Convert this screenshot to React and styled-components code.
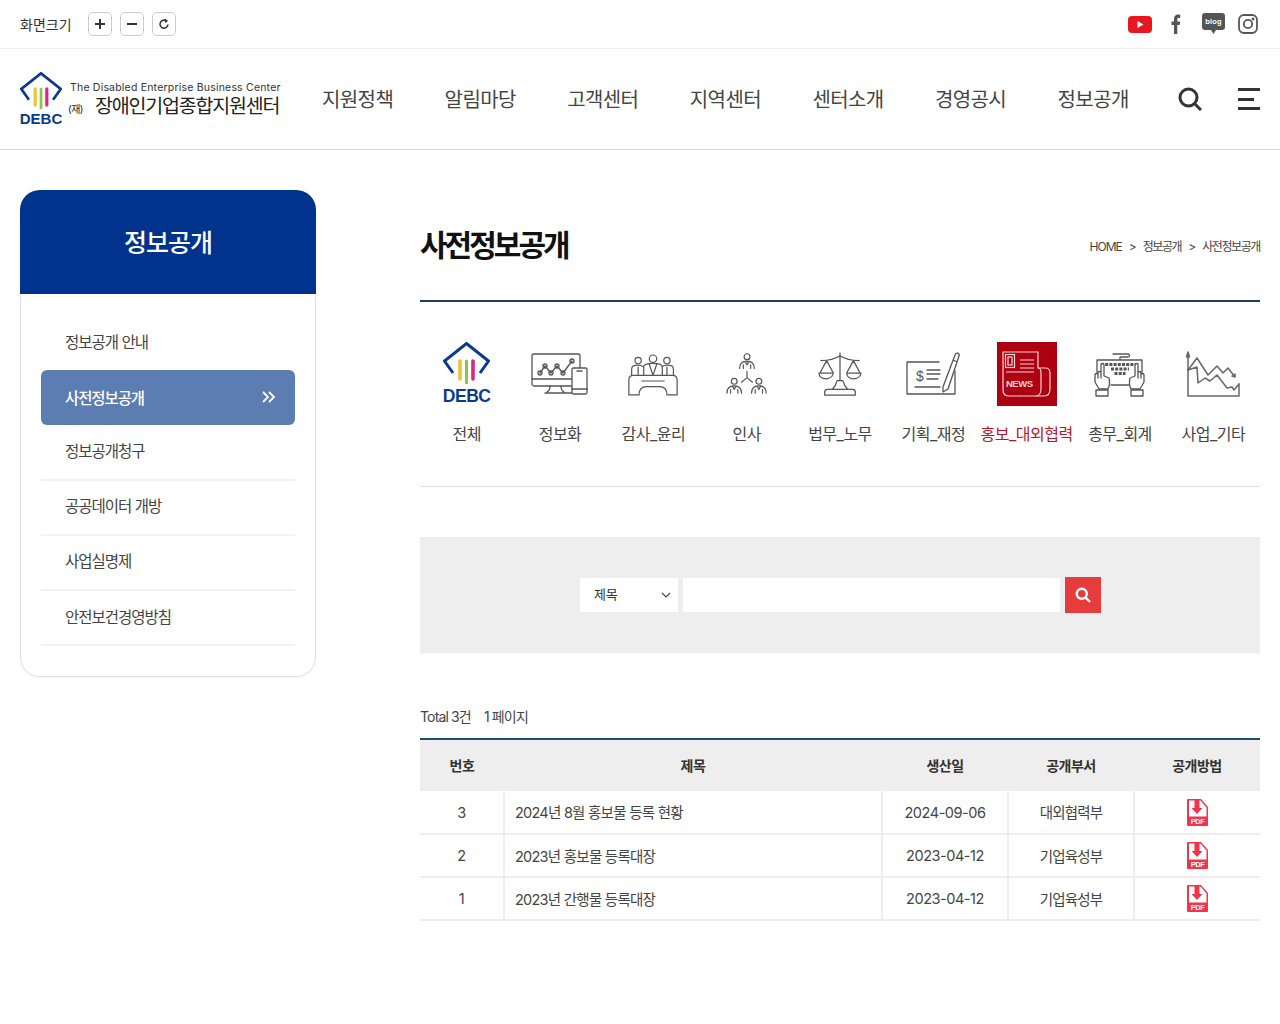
import React from 'react';
import styled, { createGlobalStyle } from 'styled-components';

const GlobalStyle = createGlobalStyle`
  * { box-sizing: border-box; }
  html, body { margin: 0; padding: 0; background: #fff; }
  body {
    font-family: Inter, "Noto Sans CJK KR", sans-serif;
    color: #333;
  }
  ul { list-style: none; margin: 0; padding: 0; }
  a { color: inherit; text-decoration: none; }
  h1, h2 { margin: 0; }
`;

const Page = styled.div`
  width: 1280px;
  min-height: 1024px;
`;

/* top util bar */
const TopBar = styled.div`
  height: 49px;
  border-bottom: 1px solid #f0f0f0;
  padding: 0 22px 0 20px;
  display: flex;
  align-items: center;
  justify-content: space-between;
`;
const FontSize = styled.div`
  display: flex;
  align-items: center;
  font-size: 14px;
  color: #333;
  span { width: 68px; }
`;
const SizeBtn = styled.button`
  width: 24px;
  height: 24px;
  margin-right: 8px;
  padding: 0;
  border: 1px solid #ccc;
  border-radius: 5px;
  background: #fff;
  display: flex;
  align-items: center;
  justify-content: center;
  color: #333;
`;
const Sns = styled.div`
  display: flex;
  align-items: center;
  gap: 13px;
`;

/* main header */
const HeaderEl = styled.header`
  height: 101px;
  border-bottom: 1px solid #d9d9d9;
  padding: 0 20px;
  display: flex;
  align-items: center;
`;
const Logo = styled.a`
  width: 262px;
  flex: none;
  display: flex;
  align-items: center;
  gap: 6px;
`;
const LogoMark = styled.div`
  width: 42px;
  display: flex;
  flex-direction: column;
  align-items: center;
  gap: 2px;
  flex: none;
`;
const DebcText = styled.span`
  font-family: "Liberation Sans", sans-serif;
  font-weight: 700;
  font-size: ${(p) => p.$size}px;
  line-height: 1;
  color: #0b3a8c;
`;
const LogoCopy = styled.div`
  display: flex;
  flex-direction: column;
  margin-top: 4px;
  white-space: nowrap;
  em {
    font-style: normal;
    font-size: 10.5px;
    line-height: 13px;
    letter-spacing: 0.2px;
    color: #333;
    padding-left: 2px;
  }
  strong {
    display: flex;
    align-items: baseline;
    font-weight: 400;
    font-size: 19.5px;
    line-height: 24px;
    letter-spacing: -1.2px;
    color: #222;
  }
  small {
    width: 27px;
    font-size: 10px;
    letter-spacing: -0.5px;
  }
`;
const Gnb = styled.ul`
  display: flex;
  margin: -2px 0 0 40px;
  li {
    width: 122.6px;
    font-size: 20px;
    letter-spacing: -0.6px;
    font-weight: 400;
    color: #444;
    white-space: nowrap;
  }
  li:last-child { width: 100px; }
`;
const HeaderBtns = styled.div`
  margin-left: auto;
  display: flex;
  align-items: center;
  gap: 36px;
`;
const Hamburger = styled.div`
  width: 22px;
  height: 22px;
  display: flex;
  flex-direction: column;
  justify-content: space-between;
  i {
    display: block;
    height: 3px;
    background: #333;
  }
  i:nth-child(2) { width: 16px; }
`;

/* body */
const Body = styled.div`
  display: flex;
  padding: 40px 20px 0;
`;
const Aside = styled.aside`
  width: 296px;
  flex: none;
  height: 487px;
  border: 1px solid #e0e0e0;
  border-radius: 20px;
  box-shadow: 0 1px 3px rgba(0, 0, 0, 0.05);
`;
const AsideHead = styled.h2`
  height: 104px;
  margin: -1px -1px 0;
  padding-bottom: 2px;
  background: #00338d;
  border-radius: 20px 20px 0 0;
  color: #fff;
  font-size: 25px;
  font-weight: 500;
  letter-spacing: -1px;
  display: flex;
  align-items: center;
  justify-content: center;
`;
const SideList = styled.ul`
  padding: 21px 20px 0;
`;
const SideItem = styled.li`
  height: 55.2px;
  padding: 0 19px ${(p) => (p.$active ? '2px' : '4px')} 24px;
  display: flex;
  align-items: center;
  justify-content: space-between;
  font-size: 15.5px;
  letter-spacing: ${(p) => (p.$active ? '-1.1px' : '-1px')};
  color: ${(p) => (p.$active ? '#fff' : '#444')};
  font-weight: ${(p) => (p.$active ? 500 : 400)};
  background: ${(p) => (p.$active ? '#5b7db1' : 'transparent')};
  border-radius: ${(p) => (p.$active ? '6px' : '0')};
  border-bottom: ${(p) => (p.$plain ? 'none' : '2px solid #f2f2f2')};
`;
const Main = styled.main`
  width: 840px;
  margin-left: 104px;
`;
const TitleRow = styled.div`
  height: 112px;
  border-bottom: 2px solid #1f3f5c;
  display: flex;
  align-items: flex-start;
  justify-content: space-between;
  padding-top: 34px;
  h1 {
    font-size: 30px;
    line-height: 42px;
    font-weight: 700;
    letter-spacing: -3px;
    color: #111;
  }
`;
const Crumbs = styled.div`
  display: flex;
  gap: 7px;
  padding-top: 14px;
  font-size: 12px;
  line-height: 18px;
  color: #444;
`;
const Crumb = styled.span`
  letter-spacing: ${(p) => (p.$ko ? '-1.4px' : '-1px')};
`;
const Cats = styled.ul`
  display: grid;
  grid-template-columns: repeat(9, 1fr);
  padding: 40px 0 0;
  height: 185px;
  border-bottom: 1px solid #ddd;
`;
const Cat = styled.li`
  display: flex;
  flex-direction: column;
  align-items: center;
  font-size: 16px;
  letter-spacing: -0.5px;
  white-space: nowrap;
  color: ${(p) => (p.$active ? '#b5162b' : '#444')};
`;
const CatIcon = styled.div`
  width: 60px;
  height: 64px;
  margin-bottom: 15.5px;
  display: flex;
  align-items: center;
  justify-content: center;
  flex-direction: column;
  gap: ${(p) => p.$gap || 0}px;
  background: ${(p) => (p.$active ? '#ad0010' : 'transparent')};
`;
const CatLabel = styled.span`
  line-height: 24px;
`;
const SearchBox = styled.form`
  height: 116px;
  margin-top: 50px;
  padding-left: 160px;
  background: #eee;
  box-shadow: 0 1px 2px rgba(0, 0, 0, 0.04);
  display: flex;
  align-items: center;
  gap: 5px;
`;
const SelectBox = styled.div`
  width: 98px;
  height: 34px;
  background: #fff;
  padding: 0 7px 0 14px;
  display: flex;
  align-items: center;
  justify-content: space-between;
  font-size: 13px;
  letter-spacing: -0.3px;
  color: #333;
  b {
    font-weight: 400;
    margin-top: -3px;
  }
`;
const SearchInput = styled.input`
  width: 377px;
  height: 34px;
  border: 0;
  background: #fff;
  outline: none;
`;
const SearchBtn = styled.button`
  width: 36px;
  height: 36px;
  padding: 0;
  border: 0;
  background: #e63c3c;
  display: flex;
  align-items: center;
  justify-content: center;
`;
const Total = styled.div`
  margin-top: 53px;
  height: 21px;
  font-size: 14px;
  line-height: 21px;
  letter-spacing: -0.85px;
  color: #444;
  display: flex;
  gap: 13px;
`;
const Table = styled.table`
  width: 840px;
  margin-top: 11px;
  border-collapse: collapse;
  table-layout: fixed;
  border-top: 2px solid #1f4f70;
  th {
    height: 52px;
    background: #eee;
    font-size: 14px;
    font-weight: 700;
    letter-spacing: -0.5px;
    color: #333;
    padding: 0 0 2px;
  }
  td {
    height: 43px;
    padding: 0;
    text-align: center;
    font-size: 14.5px;
    letter-spacing: -0.45px;
    color: #444;
    border-bottom: 2px solid #eee;
    border-left: 2px solid #eee;
  }
  td:first-child { border-left: 0; }
`;
const TitleCell = styled.td`
  && {
    text-align: left;
    padding: 0 0 1px 10px;
    letter-spacing: -0.75px;
  }
`;
const DeptCell = styled.td`
  && {
    padding-bottom: 1px;
    letter-spacing: -0.8px;
  }
`;
const PdfCell = styled.span`
  display: flex;
  justify-content: center;
`;

const Svg = styled.svg`
  display: block;
  flex: none;
`;

const DiamondMark = ({ w }) => (
  <Svg width={w} height={(w * 42) / 47} viewBox="0 0 47 42" fill="none">
    <path d="M10 31 1.500 19 23.500 1.500 45.500 19 37 31" stroke="#0b3a8c" strokeWidth="3" />
    <path d="M17 19v18" stroke="#efc23a" strokeWidth="3.600" strokeLinecap="round" />
    <path d="M23.500 19v22" stroke="#8fc24a" strokeWidth="3" strokeLinecap="round" />
    <path d="M30 19v18" stroke="#d8287f" strokeWidth="3.600" strokeLinecap="round" />
  </Svg>
);

const line = { fill: 'none', stroke: '#555', strokeWidth: 1.3, strokeLinejoin: 'round', strokeLinecap: 'round' };

const Person = ({ x, y }) => (
  <g {...line}>
    <circle cx={x} cy={y} r="3.2" />
    <path d={`M${x - 8} ${y + 13}c0-6 3-8 8-8s8 2 8 8M${x - 4} ${y + 13}v-4M${x + 4} ${y + 13}v-4M${x - 2} ${y + 5}l2 4 2-4`} />
  </g>
);

const IconDevices = () => (
  <Svg width="57" height="42" viewBox="0 0 57 42" {...line}>
    <path d="M41 33H3a2 2 0 0 1-2-2V3a2 2 0 0 1 2-2h44a2 2 0 0 1 2 2v12" />
    <path d="M1 26h40M16 39c2-1 3-3 3-6M30 33c0 3 1 5 3 6M14 40h27" />
    <path d="M9 20l5-7 6 7 6-7 6 7 9-12" />
    <circle cx="9" cy="20" r="2" /><circle cx="14" cy="13" r="2" /><circle cx="20" cy="20" r="2" /><circle cx="26" cy="13" r="2" /><circle cx="32" cy="20" r="2" /><circle cx="41" cy="8" r="2" />
    <rect x="41" y="15" width="15" height="26" rx="1.500" fill="#fff" />
    <path d="M41 36h15M46 18h5" />
  </Svg>
);
const IconMeeting = () => (
  <Svg width="52" height="43" viewBox="0 0 56 46" {...line}>
    <circle cx="12" cy="8" r="3.400" /><circle cx="28" cy="6" r="4" /><circle cx="43" cy="8" r="3.400" />
    <path d="M5 24v-7c0-3 3-4 7-4 2 0 4 .5 5 1.500M50 24v-7c0-3-3-4-7-4-2 0-4 .5-5 1.500M18 24v-9c0-3 5-4 10-4s10 1 10 4v9M24 12l4 12 4-12M12 15v9M43 15v9" />
    <path d="M2 45V29c0-3 2-5 5-5h42c3 0 5 2 5 5v16H43c0-6-3-9-8-9H21c-5 0-8 3-8 9zM16 30h24" />
  </Svg>
);
const IconOrg = () => (
  <Svg width="44" height="42" viewBox="0 0 48 46" {...line}>
    <Person x={24} y={4} />
    <Person x={10} y={31} />
    <Person x={37} y={31} />
    <path d="M24 20v7M24 27l-6 5M24 27l6 5" />
  </Svg>
);
const IconScale = () => (
  <Svg width="46" height="44" viewBox="0 0 48 46" {...line}>
    <path d="M4 9c8 0 14-1 20-5 6 4 12 5 20 5M24 1v29" />
    <path d="M10 9 3 22h14zM38 9l-7 13h14zM2 22c0 8 14 8 15 0M31 22c0 8 14 8 15 0" />
    <path d="M21 30h6c1 4 3 7 5 9H16c2-2 4-5 5-9zM11 39h26c2 0 3 1 3 3v3H8v-3c0-2 1-3 3-3z" />
  </Svg>
);
const IconCheck = () => (
  <Svg width="54" height="46" viewBox="0 0 54 46" {...line}>
    <path d="M33 11H1v32h48V20" />
    <text x="10" y="30" fontFamily="Liberation Sans, sans-serif" fontSize="14" fill="#555" stroke="none">$</text>
    <path d="M21 19h13M21 23h13M21 28h11M9 36h25" />
    <path d="M37 36l12-32c1-3 5-2 4 1L42 38l-5 3zM47 9l4 2" />
  </Svg>
);
const IconNews = () => (
  <Svg width="49" height="46" viewBox="0 0 49 46" fill="none" stroke="#f6d5d5" strokeWidth="1.200">
    <path d="M1 1v38c0 4 2 6 6 6h35c4 0 6-3 6-7V22c0-3-2-5-5-5h-7V1z" />
    <path d="M36 17c2 0 3 2 3 5v16c0 4-2 7-5 7" />
    <rect x="3.500" y="3.500" width="9" height="13" /><rect x="6" y="6" width="4" height="8" />
    <path d="M18 9h14M18 13h14M18 17h14M4 21h28" />
    <text x="4" y="36" fontFamily="Liberation Sans, sans-serif" fontWeight="700" fontSize="9.500" fill="#f6d5d5" stroke="none">NEWS</text>
  </Svg>
);
const Hand = () => (
  <g>
    <path d="M6 38 2 31v-7a1.500 1.500 0 0 1 3 0v3-5a1.500 1.500 0 0 1 3 0v5V14a1.500 1.500 0 0 1 3 0v11l5 2c1 4 1 7-1 11z" fill="#fff" />
    <rect x="3" y="39" width="12" height="6" />
  </g>
);
const IconKeyboard = () => (
  <Svg width="54" height="46" viewBox="0 0 54 46" {...line}>
    <path d="M27 9V6h8c2 0 2-3 0-3H20M4 28V9h45v19M18 34h18" />
    <g strokeLinecap="butt" strokeWidth="3">
      <path d="M8 13.500h38" strokeDasharray="3 1.200" />
      <path d="M18 18h18" strokeDasharray="3 1.200" />
      <path d="M21.500 22.500h11" strokeDasharray="3 1.200" />
    </g>
    <Hand />
    <g transform="translate(53 0) scale(-1 1)"><Hand /></g>
  </Svg>
);
const IconChart = () => (
  <Svg width="54" height="46" viewBox="0 0 54 46" {...line} stroke="#666" strokeWidth="1.500">
    <path d="M2 1v44h51V33M.5 6 2 1l1.500 5" />
    <path d="M2 19 11 7l11 17 9-9 6 7 5-5 7 9M46 25l3 1v-3" />
    <path d="M2 19l9-3 1 16 7-5 5 3 7-6 10 13 5-1 2 3 5-6" />
  </Svg>
);
const PdfIcon = () => (
  <Svg width="21" height="27" viewBox="0 0 21 27">
    <path d="M1 0h13l7 8v18a1 1 0 0 1-1 1H1a1 1 0 0 1-1-1V1a1 1 0 0 1 1-1z" fill="#f0354a" />
    <path d="M2 1.500h11.500L19.500 8.500v9H2z" fill="#fff" />
    <path d="M7.500 0h5v9h3l-5.500 6-5.500-6h3z" fill="#f0354a" />
    <text x="10.500" y="24.800" textAnchor="middle" fontFamily="Liberation Sans, sans-serif" fontWeight="700" fontSize="7.500" fill="#fff">PDF</text>
  </Svg>
);

const sideMenu = ['정보공개 안내', '사전정보공개', '정보공개청구', '공공데이터 개방', '사업실명제', '안전보건경영방침'];
const navMenu = ['지원정책', '알림마당', '고객센터', '지역센터', '센터소개', '경영공시', '정보공개'];
const cats = [
  { label: '전체', gap: 4, icon: <><DiamondMark w={47} /><DebcText $size={17.500}>DEBC</DebcText></> },
  { label: '정보화', icon: <IconDevices /> },
  { label: '감사_윤리', icon: <IconMeeting /> },
  { label: '인사', icon: <IconOrg /> },
  { label: '법무_노무', icon: <IconScale /> },
  { label: '기획_재정', icon: <IconCheck /> },
  { label: '홍보_대외협력', icon: <IconNews />, active: true },
  { label: '총무_회계', icon: <IconKeyboard /> },
  { label: '사업_기타', icon: <IconChart /> },
];
const rows = [
  { no: 3, title: '2024년 8월 홍보물 등록 현황', date: '2024-09-06', dept: '대외협력부' },
  { no: 2, title: '2023년 홍보물 등록대장', date: '2023-04-12', dept: '기업육성부' },
  { no: 1, title: '2023년 간행물 등록대장', date: '2023-04-12', dept: '기업육성부' },
];

const App = () => {
  return (
    <Page>
      <GlobalStyle />
      <TopBar>
        <FontSize>
          <span>화면크기</span>
          <SizeBtn aria-label="확대">
            <Svg width="12" height="12" viewBox="0 0 12 12"><path d="M6 1v10M1 6h10" stroke="#333" strokeWidth="2" /></Svg>
          </SizeBtn>
          <SizeBtn aria-label="축소">
            <Svg width="12" height="12" viewBox="0 0 12 12"><path d="M1 6h10" stroke="#333" strokeWidth="2" /></Svg>
          </SizeBtn>
          <SizeBtn aria-label="초기화">
            <Svg width="12" height="12" viewBox="0 0 12 12" fill="none">
              <path d="M10 6.500A4 4 0 1 1 8.500 3" stroke="#333" strokeWidth="1.500" />
              <path d="M7 .8l3.200 2.200L7 5z" fill="#333" />
            </Svg>
          </SizeBtn>
        </FontSize>
        <Sns>
          <Svg width="24" height="17" viewBox="0 0 24 17">
            <rect width="24" height="17" rx="4" fill="#e8161f" />
            <path d="M9.500 5v7l6-3.500z" fill="#fff" />
          </Svg>
          <Svg width="24" height="20" viewBox="0 0 24 20">
            <path d="M9 20V11H6.500V7.500H9V5c0-3 1.600-4.500 4.200-4.500h2V4h-1.500c-1.100 0-1.400.5-1.400 1.400v2.100h2.900l-.5 3.500h-2.400v9z" fill="#555" />
          </Svg>
          <Svg width="23" height="22" viewBox="0 0 23 22">
            <path d="M3 0h17a3 3 0 0 1 3 3v11a3 3 0 0 1-3 3h-6l-2.500 4L9 17H3a3 3 0 0 1-3-3V3a3 3 0 0 1 3-3z" fill="#555" />
            <text x="11.500" y="11" textAnchor="middle" fontFamily="Liberation Sans, sans-serif" fontWeight="700" fontSize="7.500" letterSpacing="0.2" fill="#fff">blog</text>
          </Svg>
          <Svg width="20" height="20" viewBox="0 0 20 20" fill="none" stroke="#555" strokeWidth="1.800">
            <rect x="1" y="1" width="18" height="18" rx="5" />
            <circle cx="10" cy="10" r="4.200" />
            <circle cx="15" cy="5" r=".6" fill="#555" />
          </Svg>
        </Sns>
      </TopBar>

      <HeaderEl>
        <Logo href="#none">
          <LogoMark>
            <DiamondMark w={42} />
            <DebcText $size={15}>DEBC</DebcText>
          </LogoMark>
          <LogoCopy>
            <em>The Disabled Enterprise Business Center</em>
            <strong><small>(재)</small>장애인기업종합지원센터</strong>
          </LogoCopy>
        </Logo>
        <Gnb>
          {navMenu.map((m) => <li key={m}>{m}</li>)}
        </Gnb>
        <HeaderBtns>
          <Svg width="24" height="24" viewBox="0 0 24 24" fill="none" stroke="#333" strokeWidth="3">
            <circle cx="10.500" cy="10.500" r="8.500" />
            <path d="M17 17l6 6" />
          </Svg>
          <Hamburger><i /><i /><i /></Hamburger>
        </HeaderBtns>
      </HeaderEl>

      <Body>
        <Aside>
          <AsideHead>정보공개</AsideHead>
          <SideList>
            {sideMenu.map((m, i) => (
              <SideItem key={m} $active={i === 1} $plain={i < 2}>
                {m}
                {i === 1 && (
                  <Svg width="14" height="12" viewBox="0 0 14 12" fill="none" stroke="#fff" strokeWidth="1.800">
                    <path d="M1 1l5 5-5 5M7 1l5 5-5 5" />
                  </Svg>
                )}
              </SideItem>
            ))}
          </SideList>
        </Aside>

        <Main>
          <TitleRow>
            <h1>사전정보공개</h1>
            <Crumbs>
              <Crumb>HOME</Crumb><Crumb>&gt;</Crumb><Crumb $ko>정보공개</Crumb><Crumb>&gt;</Crumb><Crumb $ko>사전정보공개</Crumb>
            </Crumbs>
          </TitleRow>

          <Cats>
            {cats.map((c) => (
              <Cat key={c.label} $active={c.active}>
                <CatIcon $active={c.active} $gap={c.gap}>{c.icon}</CatIcon>
                <CatLabel>{c.label}</CatLabel>
              </Cat>
            ))}
          </Cats>

          <SearchBox onSubmit={(e) => e.preventDefault()}>
            <SelectBox>
              <b>제목</b>
              <Svg width="10" height="6" viewBox="0 0 10 6" fill="none" stroke="#444" strokeWidth="1.200"><path d="M1 1l4 4 4-4" /></Svg>
            </SelectBox>
            <SearchInput aria-label="검색어" />
            <SearchBtn aria-label="검색">
              <Svg width="16" height="16" viewBox="0 0 16 16" fill="none" stroke="#fff" strokeWidth="2.400">
                <circle cx="6.800" cy="6.800" r="5" />
                <path d="M10.500 10.500 15 15" />
              </Svg>
            </SearchBtn>
          </SearchBox>

          <Total><span>Total 3건</span><span>1 페이지</span></Total>

          <Table>
            <colgroup>
              <col width="84" /><col width="378" /><col width="126" /><col width="126" /><col width="126" />
            </colgroup>
            <thead>
              <tr>
                <th>번호</th><th>제목</th><th>생산일</th><th>공개부서</th><th>공개방법</th>
              </tr>
            </thead>
            <tbody>
              {rows.map((r) => (
                <tr key={r.no}>
                  <td>{r.no}</td>
                  <TitleCell>{r.title}</TitleCell>
                  <td>{r.date}</td>
                  <DeptCell>{r.dept}</DeptCell>
                  <td><PdfCell><PdfIcon /></PdfCell></td>
                </tr>
              ))}
            </tbody>
          </Table>
        </Main>
      </Body>
    </Page>
  );
};

export default App;
